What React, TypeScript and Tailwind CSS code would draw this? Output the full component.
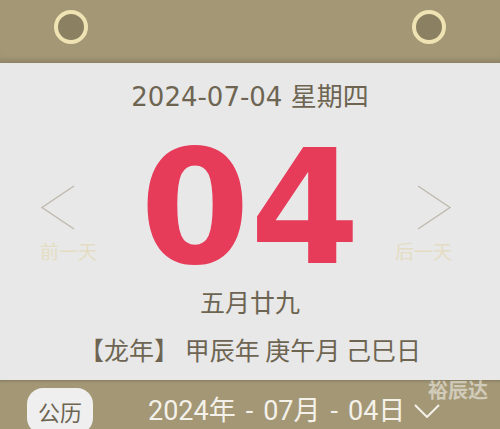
import React from 'react'

const CJK = "font-['DejaVu_Sans','Noto_Sans_CJK_SC',sans-serif]"

function Ring() {
  return (
    <div className="flex h-[34px] w-[34px] items-center justify-center rounded-full border-[4.5px] border-[#efe3b4] bg-[#8b8162]" />
  )
}

function Chevron({ dir }: { dir: 'left' | 'right' }) {
  const pts = dir === 'left' ? '34,1 2,22.5 34,44' : '2,1 34,22.5 2,44'
  return (
    <svg width="36" height="45" viewBox="0 0 36 45" fill="none">
      <polyline points={pts} stroke="#bdb8ab" strokeWidth="1.3" />
    </svg>
  )
}

export default function App() {
  return (
    <div className={`relative flex h-[429px] w-[500px] flex-col overflow-hidden bg-[#a39775] ${CJK}`}>
      {/* hanger bar */}
      <div className="flex h-[63px] shrink-0 items-start justify-between bg-[#a39775] px-[54px] pt-[10px] shadow-[inset_0_-7px_6px_-5px_rgba(0,0,0,0.18)]">
        <Ring />
        <Ring />
      </div>

      {/* page */}
      <div className="flex h-[317px] shrink-0 flex-col items-center bg-[#e8e8e8] text-[#6d6552]">
        <div className="mt-[17px] text-[26px] leading-[34px]">2024-07-04 星期四</div>

        <div className="mt-[24px] grid w-full grid-cols-[1fr_auto_1fr]">
          <div className="ml-[40px] mt-[47px] flex flex-col items-start justify-self-start">
            <Chevron dir="left" />
            <span className="mt-[8px] font-['Noto_Sans_CJK_SC',sans-serif] text-[19px] leading-[26px] text-[#e4ddc3]">前一天</span>
          </div>
          <div className="font-['DejaVu_Sans',sans-serif] text-[158px] font-bold leading-[140px] text-[#e63c5a]">04</div>
          <div className="mr-[48px] mt-[47px] flex flex-col items-end justify-self-end">
            <Chevron dir="right" />
            <span className="mt-[8px] font-['Noto_Sans_CJK_SC',sans-serif] text-[19px] leading-[26px] text-[#e4ddc3]">后一天</span>
          </div>
        </div>

        <div className="mt-[7px] font-['Noto_Sans_CJK_SC',sans-serif] text-[25px] leading-[32px]">五月廿九</div>
        <div className="mt-[16px] font-['Noto_Sans_CJK_SC',sans-serif] text-[25px] leading-[32px]">【龙年】 甲辰年 庚午月 己巳日</div>
      </div>

      {/* footer */}
      <div className="flex flex-1 items-start pl-[27px] pt-[8px] shadow-[inset_0_3px_3px_-2px_rgba(0,0,0,0.2)]">
        <div className="flex h-[46px] w-[66px] shrink-0 items-center justify-center rounded-[16px] bg-[#efefef] font-['Noto_Sans_CJK_SC',sans-serif] text-[22px] text-[#6d6552]">
          公历
        </div>
        <div className="ml-[55px] mt-[7px] flex items-center gap-[10px] font-['Roboto','Noto_Sans_CJK_SC',sans-serif] text-[27px] leading-[32px] text-[#f4f1ea]">
          <span>2024年</span>
          <span>-</span>
          <span>07月</span>
          <span>-</span>
          <span>04日</span>
          <svg width="26" height="14" viewBox="0 0 26 14" fill="none" className="ml-[-1px]">
            <polyline points="1,1 13,13 25,1" stroke="#f4f1ea" strokeWidth="2" />
          </svg>
        </div>
      </div>

      {/* watermark */}
      <div className="absolute left-[428px] top-[378px] font-['Noto_Sans_CJK_SC',sans-serif] text-[20px] font-bold leading-[24px] text-white/50">
        裕辰达
      </div>
    </div>
  )
}
